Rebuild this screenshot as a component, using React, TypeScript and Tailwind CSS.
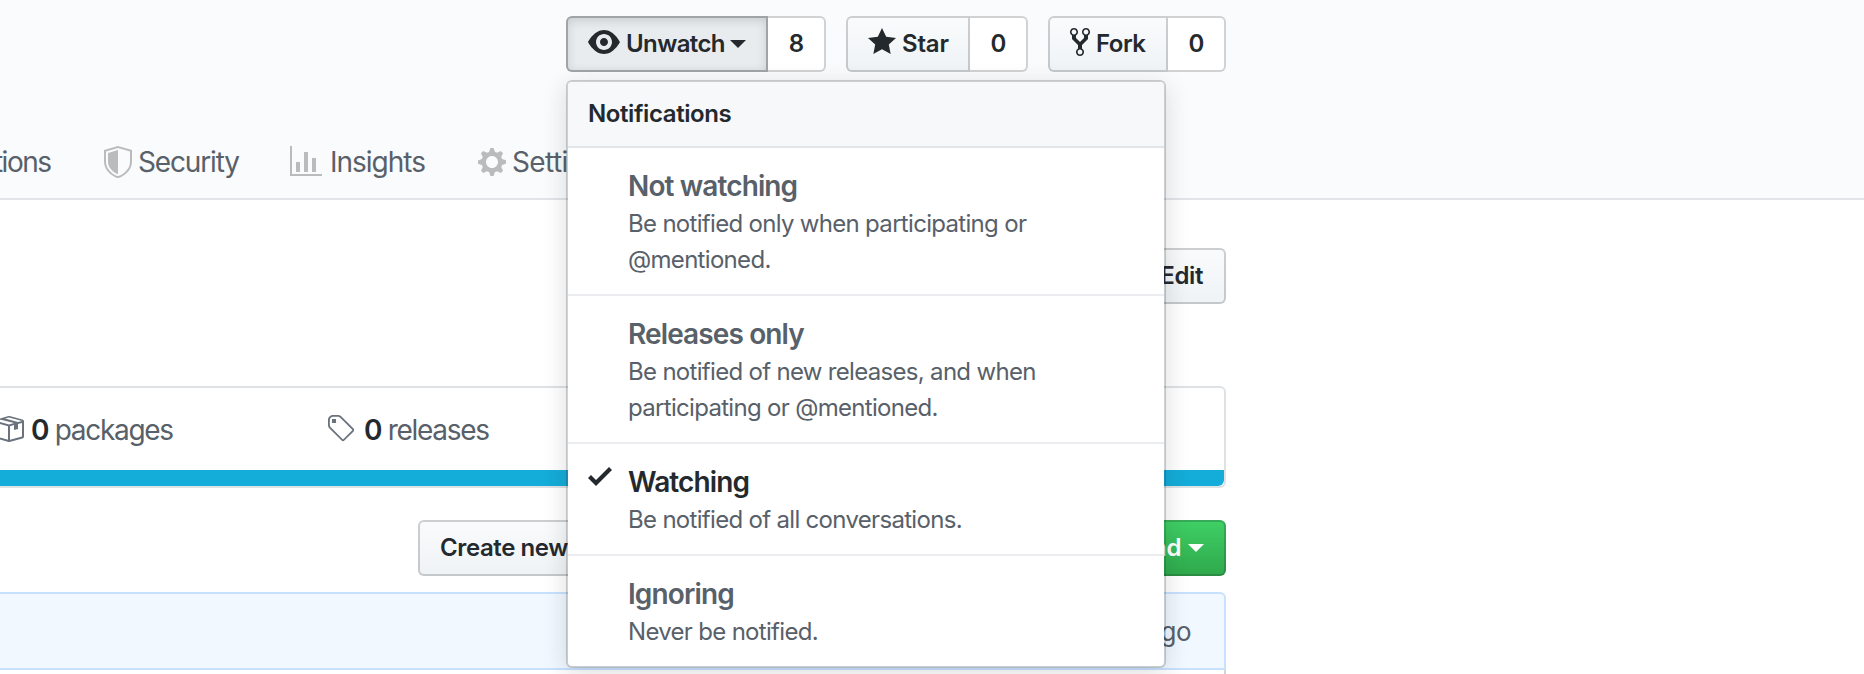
import type { ReactNode } from "react";

const paths = {
  eye: "M8.06 2C3 2 0 8 0 8s3 6 8.06 6C13 14 16 8 16 8s-3-6-7.94-6zM8 12c-2.2 0-4-1.78-4-4 0-2.2 1.8-4 4-4 2.22 0 4 1.8 4 4 0 2.22-1.78 4-4 4zm2-4c0 1.11-.89 2-2 2-1.11 0-2-.89-2-2 0-1.11.89-2 2-2 1.11 0 2 .89 2 2z",
  star: "M14 6l-4.9-.64L7 1 4.9 5.36 0 6l3.6 3.26L2.67 14 7 11.67 11.33 14l-.93-4.74L14 6z",
  fork: "M8 1a1.993 1.993 0 0 0-1 3.72V6L5 8 3 6V4.72A1.993 1.993 0 0 0 2 1a1.993 1.993 0 0 0-1 3.72V6.5l3 3v1.78A1.993 1.993 0 0 0 5 15a1.993 1.993 0 0 0 1-3.72V9.5l3-3V4.72A1.993 1.993 0 0 0 8 1zM2 4.2C1.34 4.2.8 3.65.8 3c0-.65.55-1.2 1.2-1.2.65 0 1.2.55 1.2 1.2 0 .65-.55 1.2-1.2 1.2zm3 10c-.66 0-1.2-.55-1.2-1.2 0-.65.55-1.2 1.2-1.2.65 0 1.2.55 1.2 1.2 0 .65-.55 1.2-1.2 1.2zm3-10c-.66 0-1.2-.55-1.2-1.2 0-.65.55-1.2 1.2-1.2.65 0 1.2.55 1.2 1.2 0 .65-.55 1.2-1.2 1.2z",
  shield: "M0 2l7-2 7 2v6.02C14 12.69 8.69 16 7 16c-1.69 0-7-3.31-7-7.98V2zm1 .75L7 1l6 1.75v5.268C13 12.104 8.449 15 7 15c-1.449 0-6-2.896-6-6.982V2.75zm1 .75L7 2v12c-1.207 0-5-2.482-5-5.985V3.5z",
  graph: "M16 14v1H0V0h1v14h15zM5 13H3V8h2v5zm4 0H7V3h2v10zm4 0h-2V6h2v7z",
  gear: "M14 8.77v-1.6l-1.94-.64-.45-1.09.88-1.84-1.13-1.13-1.81.91-1.09-.45-.69-1.92h-1.6l-.63 1.94-1.11.45-1.84-.88-1.13 1.13.91 1.81-.45 1.09L0 7.23v1.59l1.94.64.45 1.09-.88 1.84 1.13 1.13 1.81-.91 1.09.45.69 1.92h1.59l.63-1.94 1.11-.45 1.84.88 1.13-1.13-.92-1.81.47-1.09L14 8.75v.02zM7 11c-1.66 0-3-1.34-3-3s1.34-3 3-3 3 1.34 3 3-1.34 3-3 3z",
  pkg: "M1 4.27v7.47c0 .45.3.84.75.97l6.5 1.73c.16.05.34.05.5 0l6.5-1.73c.45-.13.75-.52.75-.97V4.27c0-.45-.3-.84-.75-.97l-6.5-1.74a1.4 1.4 0 0 0-.5 0L1.75 3.3c-.45.13-.75.52-.75.97zm7 9.09l-6-1.59V5l6 1.61v6.75zM2 4l2.5-.67L11 5.06l-2.5.67L2 4zm13 7.77l-6 1.59V6.61l2-.55V8.5l2-.53V5.53L15 5v6.77zm-2-7.24L6.5 2.8l2-.53L15 4l-2 .53z",
  tag: "M7.73 1.73C7.26 1.26 6.62 1 5.96 1H3.5C2.13 1 1 2.13 1 3.5v2.47c0 .66.27 1.3.73 1.77l6.06 6.06c.39.39 1.02.39 1.41 0l4.59-4.59a.996.996 0 0 0 0-1.41L7.73 1.73zM2.38 7.09c-.31-.3-.47-.7-.47-1.13V3.5c0-.88.72-1.59 1.59-1.59h2.47c.42 0 .83.16 1.13.47l6.14 6.13-4.73 4.73-6.13-6.15zM3.01 3h2v2H3V3h.01z",
  check: "M12 5l-8 8-4-4 1.5-1.5L4 10l6.5-6.5L12 5z",
};

function Icon({ name, w, className = "" }: { name: keyof typeof paths; w: number; className?: string }) {
  return (
    <svg width={w * 2} height={32} viewBox={`0 0 ${w} 16`} fill="currentColor" className={`shrink-0 ${className}`}>
      <path fillRule="evenodd" d={paths[name]} />
    </svg>
  );
}

function Caret({ className = "" }: { className?: string }) {
  return (
    <svg width="16" height="8" viewBox="0 0 16 8" fill="currentColor" className={`shrink-0 ${className}`}>
      <path d="M0 0h16L8 8z" />
    </svg>
  );
}

const grayButton = "border-[rgba(27,31,35,0.2)] bg-linear-to-b from-[#fafbfc] to-[#eff3f6] bg-origin-border";

function CountButton({ width, active = false, count, children }: { width: string; active?: boolean; count: string; children: ReactNode }) {
  return (
    <div className="flex h-14 text-2xl font-semibold text-[#24292e]">
      <button
        className={`flex items-center rounded-l-md border-2 pl-5 ${width} ${
          active
            ? "border-[rgba(27,31,35,0.35)] bg-[#e9ecef] shadow-[inset_0_3px_10px_rgba(27,31,35,0.15)]"
            : grayButton
        }`}
      >
        {children}
      </button>
      <span className="flex w-[58px] items-center justify-center rounded-r-md border-2 border-l-0 border-[rgba(27,31,35,0.2)] bg-white pl-px">
        {count}
      </span>
    </div>
  );
}

function MenuItem({ title, selected = false, last = false, children }: { title: string; selected?: boolean; last?: boolean; children: ReactNode }) {
  return (
    <div className={`flex py-4 pl-5 ${last ? "" : "border-b-2 border-[#eaecef]"}`}>
      <div className="w-10 text-[#24292e]">{selected && <Icon name="check" w={12} />}</div>
      <div className="whitespace-nowrap text-[#586069]">
        <div className={`h-[42px] text-[28px] leading-[44px] font-semibold tracking-[-0.88px] ${selected ? "text-[#24292e]" : ""}`}>{title}</div>
        <div className="text-2xl leading-9 tracking-[-0.69px]">{children}</div>
      </div>
    </div>
  );
}

function NotificationsMenu() {
  return (
    <div className="absolute top-16 left-0 z-10 w-[600px] rounded-md border-2 border-[rgba(27,31,35,0.2)] bg-white bg-clip-padding shadow-[0_6px_24px_rgba(27,31,35,0.15)]">
      <div className="flex h-[66px] items-center rounded-t border-b-2 border-[#e1e4e8] bg-[#f6f8fa] pl-5 text-2xl font-semibold tracking-[-0.4px] text-[#24292e]">
        Notifications
      </div>
      <MenuItem title="Not watching">
        Be notified only when participating or
        <br />
        @mentioned.
      </MenuItem>
      <MenuItem title="Releases only">
        Be notified of new releases, and when
        <br />
        participating or @mentioned.
      </MenuItem>
      <MenuItem title="Watching" selected>
        Be notified of all conversations.
      </MenuItem>
      <MenuItem title="Ignoring" last>
        Never be notified.
      </MenuItem>
    </div>
  );
}

export default function App() {
  return (
    <div className="h-[674px] w-full overflow-hidden bg-white font-['Inter','Liberation_Sans',sans-serif] whitespace-nowrap">
      <header className="h-[200px] border-b-2 border-[#e1e4e8] bg-[#fafbfc] pt-4">
        <div className="relative ml-[566px] flex gap-5">
          <CountButton width="w-[202px]" active count="8">
            <Icon name="eye" w={16} className="-mt-1" />
            <span className="ml-1.5 w-[104px] text-left tracking-[-0.6px]">Unwatch</span>
            <Caret />
          </CountButton>
          <CountButton width="w-[124px]" count="0">
            <Icon name="star" w={14} className="-mt-1" />
            <span className="ml-1.5 tracking-[-0.2px]">Star</span>
          </CountButton>
          <CountButton width="w-[120px]" count="0">
            <Icon name="fork" w={10} className="-mt-1" />
            <span className="ml-1.5 tracking-[-0.5px]">Fork</span>
          </CountButton>
          <NotificationsMenu />
        </div>
        <nav className="mt-[74px] flex h-8 items-center text-[28px] tracking-[-1.15px] text-[#586069]">
          <div className="flex w-[104px] shrink-0">
            <div className="flex w-[50.5px] justify-end tracking-[-1.5px]">Actions</div>
          </div>
          <div className="flex w-[186px] items-center">
            <Icon name="shield" w={14} className="text-[#babbbd]" />
            <span className="ml-1.5">Security</span>
          </div>
          <div className="flex w-[188px] items-center">
            <Icon name="graph" w={16} className="text-[#babbbd]" />
            <span className="ml-2 tracking-[-1px]">Insights</span>
          </div>
          <div className="flex items-center">
            <Icon name="gear" w={14} className="text-[#babbbd]" />
            <span className="ml-1.5 tracking-[-0.6px]">Settings</span>
          </div>
        </nav>
      </header>

      <main className="flex w-[1226px] flex-col">
        <div className="mt-12 flex justify-end">
          <button className={`flex h-14 items-center rounded-md border-2 px-5 pr-[21px] text-2xl font-semibold tracking-[-0.4px] text-[#24292e] ${grayButton}`}>
            Edit
          </button>
        </div>

        <section className="mt-[82px] h-[102px] overflow-hidden rounded-r-md border-2 border-l-0 border-[#dfe2e5] text-[28px] tracking-[-1.3px] text-[#586069]">
          <div className="flex h-[82px] items-center">
            <div className="-ml-2 flex w-[334px] items-center">
              <Icon name="pkg" w={16} className="text-[#6a737d]" />
              <span className="mt-0.5 ml-[7px]">
                <b className="font-semibold text-[#24292e]">0</b> packages
              </span>
            </div>
            <div className="flex items-center">
              <Icon name="tag" w={14} className="text-[#6a737d]" />
              <span className="mt-0.5 ml-2.5">
                <b className="font-semibold text-[#24292e]">0</b> releases
              </span>
            </div>
          </div>
          <div className="h-4 rounded-br-md bg-[#14acd8]" />
        </section>

        <div className="mt-8 flex justify-between pl-[418px] text-2xl font-semibold tracking-[-0.4px]">
          <button className={`flex h-14 items-center rounded-md border-2 px-5 text-[#24292e] ${grayButton}`}>Create new file</button>
          <button className="flex h-14 items-center rounded-md border-2 border-[rgba(27,31,35,0.2)] bg-linear-to-b from-[#3fd065] to-[#2fa84c] bg-origin-border pr-5 pl-5 text-white">
            Clone or download
            <Caret className="ml-[7px]" />
          </button>
        </div>

        <section className="mt-4 flex h-[78px] items-center justify-end rounded-tr-md border-2 border-l-0 border-[#c8e1ff] bg-[#f1f8ff] pr-[33px] text-[26px] tracking-[-0.5px] text-[#586069]">
          3 minutes ago
        </section>
        <div className="h-1 border-r-2 border-[#d1d5da]" />
      </main>
    </div>
  );
}
